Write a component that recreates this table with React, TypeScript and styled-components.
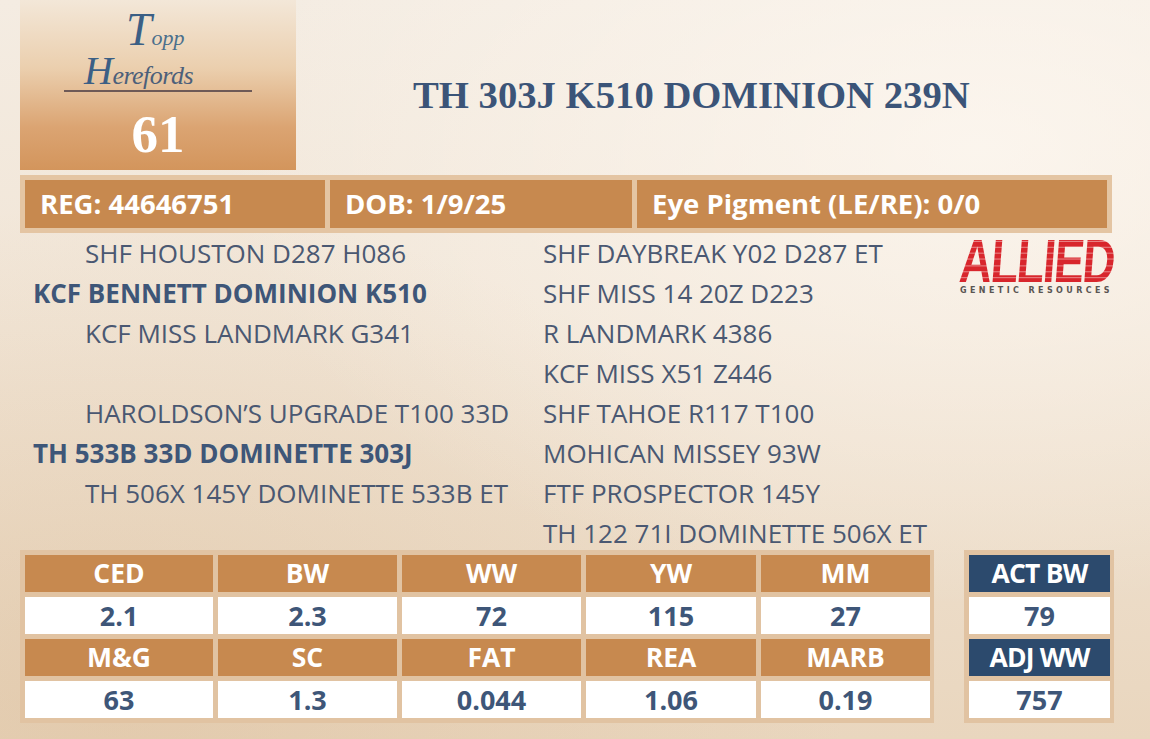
import React from 'react';
import styled, { createGlobalStyle } from 'styled-components';

const GlobalStyle = createGlobalStyle`
    html, body {
        margin: 0;
        padding: 0;
    }
    body {
        width: 1150px;
        height: 739px;
        overflow: hidden;
        font-family: "Open Sans", "Liberation Sans", sans-serif;
        background:
            radial-gradient(ellipse at 85% 20%, rgba(255, 250, 244, 0.7), transparent 55%),
            radial-gradient(ellipse at 10% 95%, rgba(214, 180, 140, 0.35), transparent 50%),
            linear-gradient(180deg, #f4ece2 0%, #f1e5d6 45%, #e9d6be 100%);
    }
`;

const pedigreeLeft = [
    { name: 'SHF HOUSTON D287 H086', indent: true },
    { name: 'KCF BENNETT DOMINION K510', bold: true },
    { name: 'KCF MISS LANDMARK G341', indent: true },
    { name: '' },
    { name: 'HAROLDSON’S UPGRADE T100 33D', indent: true },
    { name: 'TH 533B 33D DOMINETTE 303J', bold: true },
    { name: 'TH 506X 145Y DOMINETTE 533B ET', indent: true },
    { name: '' },
];

const pedigreeRight = [
    'SHF DAYBREAK Y02 D287 ET',
    'SHF MISS 14 20Z D223',
    'R LANDMARK 4386',
    'KCF MISS X51 Z446',
    'SHF TAHOE R117 T100',
    'MOHICAN MISSEY 93W',
    'FTF PROSPECTOR 145Y',
    'TH 122 71I DOMINETTE 506X ET',
];

const epdRows = [
    [
        { label: 'CED', value: '2.1' },
        { label: 'BW', value: '2.3' },
        { label: 'WW', value: '72' },
        { label: 'YW', value: '115' },
        { label: 'MM', value: '27' },
    ],
    [
        { label: 'M&G', value: '63' },
        { label: 'SC', value: '1.3' },
        { label: 'FAT', value: '0.044' },
        { label: 'REA', value: '1.06' },
        { label: 'MARB', value: '0.19' },
    ],
];

const weights = [
    { label: 'ACT BW', value: '79' },
    { label: 'ADJ WW', value: '757' },
];

const App = () => {
    return (
        <StyledPage>
            <GlobalStyle />
            <StyledTop>
                <StyledLogoBox>
                    <StyledLogoMark>
                        <div className="topp">
                            <span className="cap">T</span>
                            <span>opp</span>
                        </div>
                        <div className="herefords">
                            <span className="cap">H</span>
                            <span>erefords</span>
                        </div>
                    </StyledLogoMark>
                    <StyledLot>61</StyledLot>
                </StyledLogoBox>
                <StyledTitleArea>
                    <StyledTitle>TH 303J K510 DOMINION 239N</StyledTitle>
                </StyledTitleArea>
            </StyledTop>

            <StyledInfoBar>
                <StyledInfoCell>REG: 44646751</StyledInfoCell>
                <StyledInfoCell>DOB: 1/9/25</StyledInfoCell>
                <StyledInfoCell>Eye Pigment (LE/RE): 0/0</StyledInfoCell>
            </StyledInfoBar>

            <StyledPedigree>
                <StyledPedCol>
                    {pedigreeLeft.map((p, idx) => (
                        <StyledPedLine key={idx} $bold={p.bold} $indent={p.indent}>
                            {p.name}
                        </StyledPedLine>
                    ))}
                </StyledPedCol>
                <StyledPedCol>
                    {pedigreeRight.map((name, idx) => (
                        <StyledPedLine key={idx}>{name}</StyledPedLine>
                    ))}
                </StyledPedCol>
                <StyledAllied>
                    <span className="word">ALLIED</span>
                    <span className="sub">GENETIC RESOURCES</span>
                </StyledAllied>
            </StyledPedigree>

            <StyledStats>
                <StyledStatGrid $cols="188px 179px 179px 170px 169px">
                    {epdRows.map((row, r) => (
                        <React.Fragment key={r}>
                            {row.map(c => <StyledStatHead key={c.label}>{c.label}</StyledStatHead>)}
                            {row.map(c => <StyledStatValue key={c.label}>{c.value}</StyledStatValue>)}
                        </React.Fragment>
                    ))}
                </StyledStatGrid>
                <StyledStatGrid $cols="141px">
                    {weights.map(w => (
                        <React.Fragment key={w.label}>
                            <StyledStatHead $navy>{w.label}</StyledStatHead>
                            <StyledStatValue>{w.value}</StyledStatValue>
                        </React.Fragment>
                    ))}
                </StyledStatGrid>
            </StyledStats>
        </StyledPage>
    );
};

const StyledPage = styled.main`
    width: 1150px;
    height: 739px;
    box-sizing: border-box;
    padding: 0 0 0 20px;
    display: flex;
    flex-direction: column;
`;

const StyledTop = styled.section`
    display: flex;
    height: 170px;
`;

const StyledLogoBox = styled.div`
    width: 276px;
    height: 170px;
    background: linear-gradient(180deg, #f3e7d8 0%, #ebcfae 40%, #dba472 75%, #d3955c 100%);
    display: flex;
    flex-direction: column;
    align-items: center;
`;

const StyledLogoMark = styled.div`
    margin-top: 12px;
    width: 188px;
    height: 80px;
    display: flex;
    flex-direction: column;
    font-family: "Liberation Serif", "DejaVu Serif", serif;
    font-style: italic;
    border-bottom: 2px solid #6e5a57;
    box-sizing: border-box;
    .topp {
        margin-left: 62px;
        font-size: 22px;
        line-height: 36px;
        color: #4a6f8c;
        white-space: nowrap;
    }
    .herefords {
        margin-left: 20px;
        margin-top: -4px;
        font-size: 26px;
        line-height: 38px;
        color: #4c5f7a;
        letter-spacing: -0.5px;
        white-space: nowrap;
    }
    .cap {
        font-size: 46px;
        color: #3b5f85;
    }
    .herefords .cap {
        font-size: 40px;
    }
`;

const StyledLot = styled.div`
    margin-top: 17px;
    font-family: "Liberation Serif", "DejaVu Serif", serif;
    font-weight: bold;
    font-size: 53px;
    line-height: 50px;
    color: #ffffff;
`;

const StyledTitleArea = styled.div`
    flex: 1;
    padding: 73px 0 0 117px;
`;

const StyledTitle = styled.h1`
    margin: 0;
    font-family: "Liberation Serif", "Times New Roman", serif;
    font-weight: bold;
    font-size: 38.7px;
    line-height: 44px;
    color: #3b5478;
    white-space: nowrap;
`;

const StyledInfoBar = styled.section`
    margin-top: 5px;
    width: 1092px;
    box-sizing: border-box;
    padding: 5px;
    background: #e4c5a3;
    display: grid;
    grid-template-columns: 300px 302px 1fr;
    gap: 5px;
`;

const StyledInfoCell = styled.div`
    height: 48px;
    background: #c7894f;
    color: #ffffff;
    font-weight: bold;
    font-size: 27.5px;
    line-height: 48px;
    padding-left: 15px;
    white-space: nowrap;
`;

const StyledPedigree = styled.section`
    display: grid;
    grid-template-columns: 510px 417px 1fr;
    padding-left: 13px;
`;

const StyledPedCol = styled.div`
    display: flex;
    flex-direction: column;
`;

const StyledPedLine = styled.div<{ $bold?: boolean; $indent?: boolean }>`
    height: 40px;
    line-height: 40px;
    font-size: 26px;
    white-space: nowrap;
    font-weight: ${p => (p.$bold ? 'bold' : 'normal')};
    color: ${p => (p.$bold ? '#3e5678' : '#4a5872')};
    padding-left: ${p => (p.$indent ? '52px' : '0')};
`;

const StyledAllied = styled.div`
    display: flex;
    flex-direction: column;
    padding-top: 3px;
    .word {
        display: block;
        font-family: "Liberation Sans", Arial, sans-serif;
        font-weight: bold;
        font-size: 61px;
        line-height: 50px;
        letter-spacing: -2px;
        transform: scaleX(0.74) skewX(-6deg);
        transform-origin: left center;
        background: repeating-linear-gradient(180deg, #d8262c 0 5px, #ea8a8c 5px 6px);
        -webkit-background-clip: text;
        background-clip: text;
        color: transparent;
        white-space: nowrap;
    }
    .sub {
        margin-top: 0;
        font-family: "DejaVu Sans", sans-serif;
        font-weight: bold;
        font-size: 8px;
        letter-spacing: 3.4px;
        color: #5a5552;
        white-space: nowrap;
    }
`;

const StyledStats = styled.section`
    margin-top: -3px;
    display: flex;
    align-items: flex-start;
    gap: 30px;
`;

const StyledStatGrid = styled.div<{ $cols: string }>`
    display: grid;
    grid-template-columns: ${p => p.$cols};
    grid-auto-rows: 37px;
    gap: 5px;
    padding: 5px 4px 5px 5px;
    background: #e1c3a2;
`;

const StyledStatHead = styled.div<{ $navy?: boolean }>`
    background: ${p => (p.$navy ? '#2c4a6d' : '#c7894f')};
    color: #ffffff;
    font-weight: bold;
    font-size: 26.5px;
    line-height: 37px;
    text-align: center;
    white-space: nowrap;
    letter-spacing: ${p => (p.$navy ? '-0.8px' : '0')};
`;

const StyledStatValue = styled.div`
    background: #ffffff;
    color: #3e5678;
    font-weight: bold;
    font-size: 27px;
    line-height: 37px;
    text-align: center;
`;

export default App;
